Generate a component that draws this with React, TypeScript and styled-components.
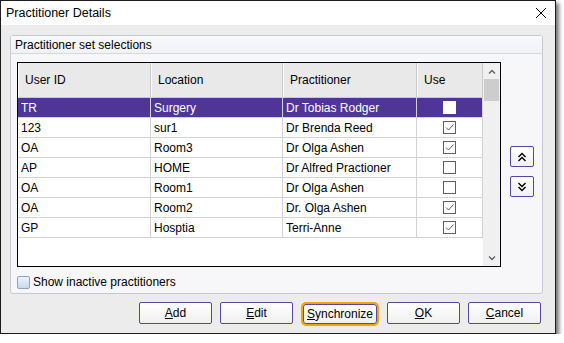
import React from 'react'
import styled, {createGlobalStyle} from 'styled-components'

const GlobalStyle = createGlobalStyle`
  body {
    margin: 0;
    background: #ffffff;
    font-family: "Liberation Sans", Arial, sans-serif;
  }
`

const Window = styled.div`
  width: 556px;
  height: 334px;
  box-sizing: border-box;
  border: 1px solid #1c1c1c;
  display: flex;
  flex-direction: column;
  box-shadow: 3px 3px 4px rgba(0, 0, 0, 0.55);
  font-size: 12px;
  color: #000;
`

const TitleBar = styled.div`
  height: 24px;
  background: #ffffff;
  display: flex;
  align-items: center;
  justify-content: space-between;
  padding: 0 8px 0 5px;
  font-size: 12.5px;
`

const Body = styled.div`
  flex: 1;
  background: #ececec;
  display: flex;
  flex-direction: column;
  padding: 10px 12px 0 9px;
`

const GroupBox = styled.div`
  height: 259px;
  box-sizing: border-box;
  border: 1px solid #c6c8d4;
  border-radius: 3px;
  background: #f7f7f9;
  display: flex;
  flex-direction: column;
`

const GroupHeader = styled.div`
  height: 17px;
  border-bottom: 1px solid #d6d8e0;
  background: linear-gradient(#f8f9fb, #eff1f5);
  display: flex;
  align-items: center;
  padding-left: 4px;
`

const GroupContent = styled.div`
  padding: 8px 0 0 6px;
  display: flex;
  flex-direction: column;
  gap: 8px;
`

const TableRow = styled.div`
  display: flex;
  align-items: center;
`

const TableFrame = styled.div`
  width: 484px;
  height: 205px;
  box-sizing: border-box;
  border: 1px solid #000;
  background: #fff;
  display: flex;
`

const Grid = styled.div`
  flex: 1;
  display: grid;
  grid-template-columns: 133px 132px 134px 66px;
  grid-auto-rows: 20px;
  grid-template-rows: 35px;
  align-content: start;
`

const HeadCell = styled.div`
  background: #e9e9e9;
  border-right: 1px solid #c9c9c9;
  border-bottom: 1px solid #c9c9c9;
  border-left: 1px solid #fafafa;
  display: flex;
  align-items: center;
  padding-left: 6px;
`

const Cell = styled.div<{$sel?: boolean; $center?: boolean}>`
  background: ${p => (p.$sel ? '#4f3595' : '#fff')};
  color: ${p => (p.$sel ? '#fff' : '#000')};
  border-right: 1px solid #d3d3d3;
  border-bottom: 1px solid #d3d3d3;
  display: flex;
  align-items: center;
  justify-content: ${p => (p.$center ? 'center' : 'flex-start')};
  padding-left: ${p => (p.$center ? '0' : '3px')};
  white-space: nowrap;
`

const Scrollbar = styled.div`
  width: 17px;
  background: #f0f0f0;
  display: flex;
  flex-direction: column;
  align-items: center;
`

const ScrollArrow = styled.div`
  height: 16px;
  display: flex;
  align-items: center;
  justify-content: center;
`

const Thumb = styled.div`
  width: 15px;
  height: 22px;
  background: #cdcdcd;
`

const Spacer = styled.div`
  flex: 1;
`

const Box = styled.div<{$sel?: boolean}>`
  width: 11px;
  height: 11px;
  border: 1px solid ${p => (p.$sel ? '#ffffff' : '#5e5e5e')};
  background: #fff;
  display: flex;
  align-items: center;
  justify-content: center;
`

const SideButtons = styled.div`
  margin-left: 9px;
  display: flex;
  flex-direction: column;
  gap: 9px;
  padding-top: 14px;
`

const SideButton = styled.div`
  width: 22px;
  height: 19px;
  border: 1px solid #5646a0;
  border-radius: 2px;
  background: linear-gradient(#ffffff, #f1f1f1);
  display: flex;
  align-items: center;
  justify-content: center;
`

const CheckRow = styled.label`
  display: flex;
  align-items: center;
  gap: 3px;
`

const BlueBox = styled.span`
  width: 11px;
  height: 11px;
  border: 1px solid #8ea3c3;
  border-radius: 2px;
  background: linear-gradient(#eef3fb, #c9d8ee);
`

const Footer = styled.div`
  display: flex;
  justify-content: flex-end;
  gap: 8px;
  padding: 8px 2px 0 0;
`

const Button = styled.div<{$focus?: boolean}>`
  width: ${p => (p.$focus ? '72px' : '71px')};
  height: ${p => (p.$focus ? '18px' : '20px')};
  border: 1px solid #5646a0;
  background: linear-gradient(#ffffff, #f0f0f0);
  display: flex;
  align-items: center;
  justify-content: center;
  box-shadow: ${p => (p.$focus ? '0 0 0 2px #f5a300' : 'none')};
  margin: ${p => (p.$focus ? '2px' : '0')};
  border-radius: ${p => (p.$focus ? '3px' : '2px')};
  & u { text-decoration: underline; }
`

const Check = () => (
  <svg width="11" height="11" viewBox="0 0 11 11">
    <path d="M2 5.5 L4.5 8 L9.5 2.5" fill="none" stroke="#5a5a5a" strokeWidth="1"/>
  </svg>
)

const Chevrons = ({up}: {up?: boolean}) => (
  <svg width="10" height="10" viewBox="0 0 10 10">
    <g fill="none" stroke="#000" strokeWidth="1.4" transform={up ? '' : 'rotate(180 5 5)'}>
      <path d="M1.5 5 L5 1.5 L8.5 5"/>
      <path d="M1.5 9 L5 5.5 L8.5 9"/>
    </g>
  </svg>
)

const Caret = ({up}: {up?: boolean}) => (
  <svg width="8" height="5" viewBox="0 0 8 5">
    <path d={up ? 'M1 4.5 L4 1.5 L7 4.5' : 'M1 0.5 L4 3.5 L7 0.5'} fill="none" stroke="#606060" strokeWidth="1.3"/>
  </svg>
)

const rows = [
  {id: 'TR', loc: 'Surgery', name: 'Dr Tobias Rodger', use: false},
  {id: '123', loc: 'sur1', name: 'Dr Brenda Reed', use: true},
  {id: 'OA', loc: 'Room3', name: 'Dr Olga Ashen', use: true},
  {id: 'AP', loc: 'HOME', name: 'Dr Alfred Practioner', use: false},
  {id: 'OA', loc: 'Room1', name: 'Dr Olga Ashen', use: false},
  {id: 'OA', loc: 'Room2', name: 'Dr. Olga Ashen', use: true},
  {id: 'GP', loc: 'Hosptia', name: 'Terri-Anne', use: true},
]

export default function App() {
  return <>
    <GlobalStyle/>
    <Window>
      <TitleBar>
        <span>Practitioner Details</span>
        <svg width="12" height="12" viewBox="0 0 12 12">
          <path d="M1 1 L11 11 M11 1 L1 11" stroke="#000" strokeWidth="1"/>
        </svg>
      </TitleBar>
      <Body>
        <GroupBox>
          <GroupHeader>Practitioner set selections</GroupHeader>
          <GroupContent>
            <TableRow>
              <TableFrame>
                <Grid>
                  <HeadCell>User ID</HeadCell>
                  <HeadCell>Location</HeadCell>
                  <HeadCell>Practitioner</HeadCell>
                  <HeadCell>Use</HeadCell>
                  {rows.map((r, i) => {
                    const sel = i === 0
                    return <React.Fragment key={i}>
                      <Cell $sel={sel}>{r.id}</Cell>
                      <Cell $sel={sel}>{r.loc}</Cell>
                      <Cell $sel={sel}>{r.name}</Cell>
                      <Cell $sel={sel} $center>
                        <Box $sel={sel}>{r.use && <Check/>}</Box>
                      </Cell>
                    </React.Fragment>
                  })}
                </Grid>
                <Scrollbar>
                  <ScrollArrow><Caret up/></ScrollArrow>
                  <Thumb/>
                  <Spacer/>
                  <ScrollArrow><Caret/></ScrollArrow>
                </Scrollbar>
              </TableFrame>
              <SideButtons>
                <SideButton><Chevrons up/></SideButton>
                <SideButton><Chevrons/></SideButton>
              </SideButtons>
            </TableRow>
            <CheckRow>
              <BlueBox/>
              Show inactive practitioners
            </CheckRow>
          </GroupContent>
        </GroupBox>
        <Footer>
          <Button><span><u>A</u>dd</span></Button>
          <Button><span><u>E</u>dit</span></Button>
          <Button $focus><span><u>S</u>ynchronize</span></Button>
          <Button><span><u>O</u>K</span></Button>
          <Button><span><u>C</u>ancel</span></Button>
        </Footer>
      </Body>
    </Window>
  </>
}
